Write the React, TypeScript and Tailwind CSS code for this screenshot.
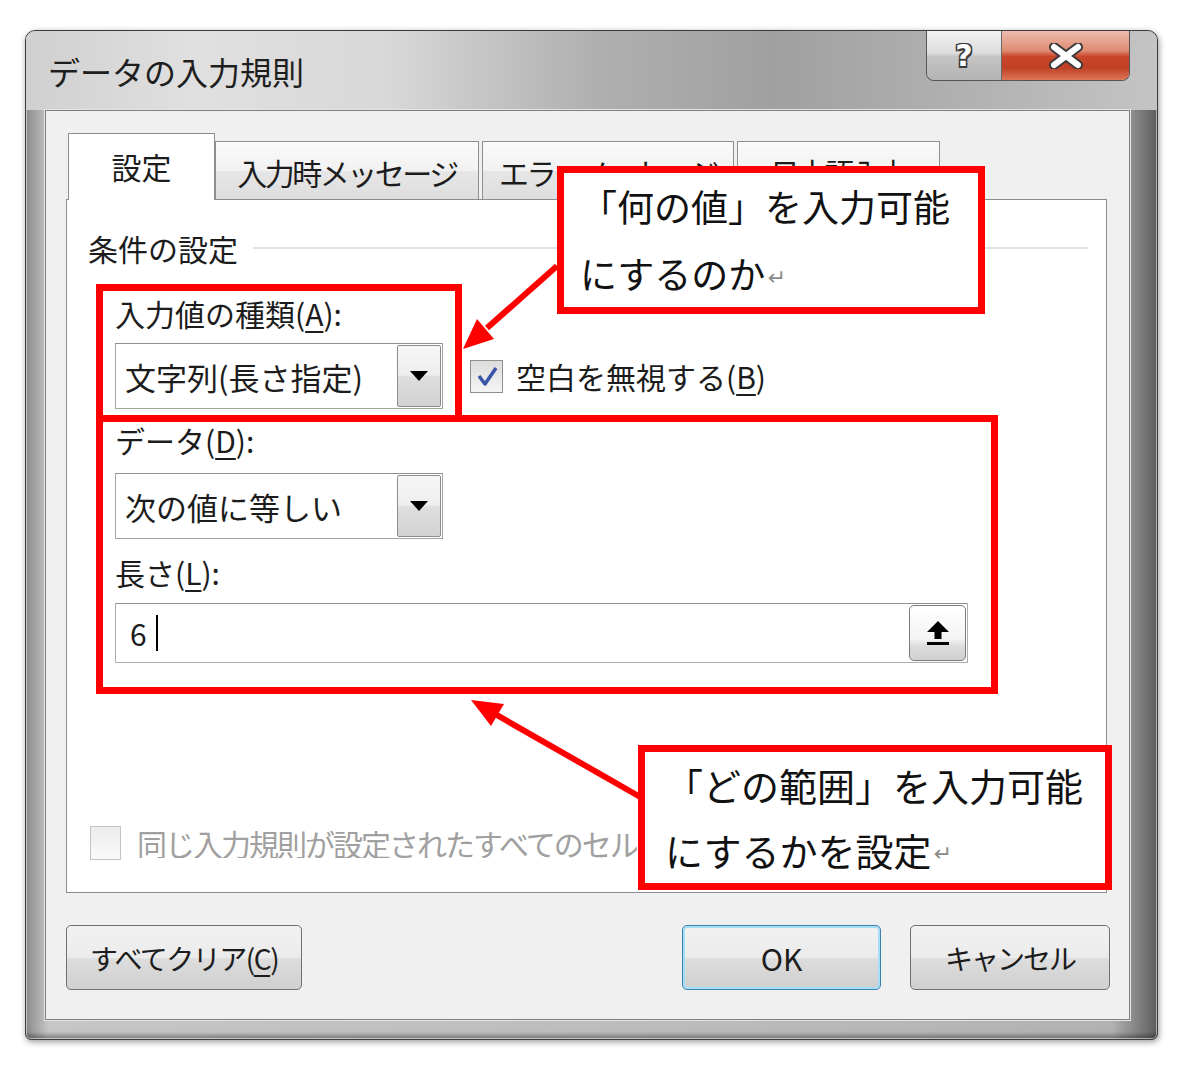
import React from "react";

function Combo({ text }: { text: string }) {
  return (
    <div className="flex h-[66px] w-[328px] items-center border border-[#a3a3a3] border-t-[#8e8f8f] bg-white">
      <span className="flex-1 whitespace-nowrap pl-[9px] text-[31px] leading-none text-[#1c1c1c]">{text}</span>
      <div className="mr-[1px] flex h-[62px] w-[44px] items-center justify-center rounded-[2px] border border-[#8c8c8c] bg-[linear-gradient(180deg,#f6f6f6_0%,#eeeeee_48%,#dedede_52%,#d2d2d2_100%)]">
        <svg width="18" height="10" viewBox="0 0 18 10">
          <path d="M0 0H18L9 10Z" fill="#000" />
        </svg>
      </div>
    </div>
  );
}

function U({ c }: { c: string }) {
  return <span className="underline decoration-[2px] underline-offset-[5px]">{c}</span>;
}

function Tab({ label, w, active, ml }: { label: string; w: string; active?: boolean; ml?: string }) {
  if (active) {
    return (
      <div className={`relative z-10 -mb-[1px] flex h-[67px] items-center justify-center border border-b-0 border-[#898c95] bg-white ${w} ${ml ?? ""}`}>
        <span className="pb-[2px] text-[30px] leading-none">{label}</span>
      </div>
    );
  }
  return (
    <div className={`flex h-[58px] items-center justify-center border border-b-0 border-[#8e8f8f] bg-[linear-gradient(180deg,#fbfbfb_0%,#f1f1f1_50%,#e6e6e6_52%,#dedede_100%)] ${w} ${ml ?? ""}`}>
      <span className="whitespace-nowrap pt-[2px] text-[30px] leading-none tracking-[-2.5px]">{label}</span>
    </div>
  );
}

function Window() {
  return (
    <div className="flex h-[1010px] w-[1133px] flex-col rounded-t-[10px] rounded-b-[6px] border border-[#3c3c3c] bg-[linear-gradient(90deg,#8a8a8a_0%,#c6c6c6_2%,#bdbdbd_50%,#b2b2b2_96%,#5e5e5e_100%)] shadow-[inset_0_0_0_1px_rgba(255,255,255,0.55),inset_0_-6px_4px_-2px_rgba(0,0,0,0.35),1px_2px_6px_rgba(0,0,0,0.4)]">
      {/* Title bar */}
      <div className="flex h-[79px] items-start justify-between rounded-t-[9px] bg-[linear-gradient(90deg,#d0d0d0_0%,#e0e0e0_15%,#d8d8d8_32%,#b0b0b0_50%,#a0a0a0_66%,#b4b4b4_86%,#c4c4c4_100%)] pl-[22px] pr-[27px]">
        <div className="self-center text-[32px] leading-none text-[#1e1e1e]">データの入力規則</div>
        <div className="flex h-[50px] overflow-hidden rounded-b-[8px] border border-t-0 border-[#555555]">
          <div className="flex w-[75px] items-center justify-center border-r border-[#6a6a6a] bg-[linear-gradient(180deg,#f2f2f2_0%,#dddddd_45%,#c4c4c4_52%,#b4b4b4_100%)]">
            <span className="font-['DejaVu_Sans',sans-serif] text-[30px] font-bold leading-none text-white [text-shadow:1.5px_1.5px_0_#3a3a3a,-1.5px_-1.5px_0_#3a3a3a,1.5px_-1.5px_0_#3a3a3a,-1.5px_1.5px_0_#3a3a3a]">?</span>
          </div>
          <div className="flex w-[127px] items-center justify-center bg-[linear-gradient(180deg,#efbcae_0%,#df8b73_40%,#c9462c_52%,#c13f25_75%,#dc7658_100%)]">
            <svg width="36" height="26" viewBox="0 0 36 26">
              <path d="M6 4L30 22M30 4L6 22" stroke="#3a3a3a" strokeWidth="10" strokeLinecap="round" />
              <path d="M6 4L30 22M30 4L6 22" stroke="#ffffff" strokeWidth="6" strokeLinecap="round" />
            </svg>
          </div>
        </div>
      </div>

      {/* Client area */}
      <div className="mb-[19px] ml-[19px] mr-[27px] flex h-[910px] flex-col border border-[#7f7f7f] bg-[#f0f0f0] pl-[20px] pr-[22px] pt-[22px] shadow-[0_0_0_1px_#e4e4e4]">
        {/* Tabs */}
        <div className="flex h-[66px] items-end">
          <Tab label="設定" w="w-[147px]" active ml="ml-[2px]" />
          <Tab label="入力時メッセージ" w="w-[264px]" />
          <Tab label="エラーメッセージ" w="w-[252px]" ml="ml-[3px]" />
          <Tab label="日本語入力" w="w-[203px]" ml="ml-[3px]" />
        </div>

        {/* Tab panel */}
        <div className="flex h-[694px] w-[1041px] flex-col border border-[#898c95] bg-white">
          <div className="mt-[28px] flex h-[40px] items-center pl-[21px]">
            <span className="text-[30px] leading-none">条件の設定</span>
            <div className="ml-[15px] mr-[18px] h-[2px] flex-1 bg-[#dce4ea]" />
          </div>

          <div className="flex flex-col pl-[48px]">
            <div className="mt-[25px] flex h-[40px] items-center text-[30px] leading-none">
              入力値の種類(<U c="A" />):
            </div>
            <div className="mt-[10px] flex items-center">
              <Combo text="文字列(長さ指定)" />
              <div className="ml-[27px] flex h-[33px] w-[33px] items-center justify-center border border-[#8e8f8f] bg-[linear-gradient(180deg,#dcdcdc_0%,#f4f4f4_100%)]">
                <svg width="26" height="26" viewBox="0 0 26 26">
                  <path d="M5 13L11 21L22 5" fill="none" stroke="#3a55a8" strokeWidth="3.5" strokeLinejoin="round" />
                </svg>
              </div>
              <span className="ml-[13px] whitespace-nowrap text-[30px] leading-none">
                空白を無視する(<U c="B" />)
              </span>
            </div>

            <div className="mt-[11px] flex h-[40px] items-center text-[30px] leading-none">
              データ(<U c="D" />):
            </div>
            <div className="mt-[13px]">
              <Combo text="次の値に等しい" />
            </div>

            <div className="mt-[13px] flex h-[40px] items-center text-[30px] leading-none">
              長さ(<U c="L" />):
            </div>
            <div className="mt-[11px] flex h-[60px] w-[853px] items-center border border-[#abadb3] border-t-[#8e8f8f] bg-white">
              <span className="pl-[14px] text-[30px] leading-none">6</span>
              <span className="ml-[9px] h-[36px] border-l-2 border-black" />
              <div className="ml-auto mr-[1px] flex h-[56px] w-[57px] items-center justify-center rounded-[5px] border border-[#7a7a7a] bg-[linear-gradient(180deg,#ffffff_0%,#f4f4f4_60%,#dcdcdc_75%,#d0d0d0_100%)]">
                <svg width="24" height="26" viewBox="0 0 24 26">
                  <path d="M12 1L23 12H15.5V19H8.5V12H1Z" fill="#000" />
                  <rect x="1" y="22" width="22" height="3" fill="#000" />
                </svg>
              </div>
            </div>
          </div>

          <div className="mt-[160px] flex h-[40px] items-center pl-[23px]">
            <div className="h-[34px] w-[31px] border border-[#c4c4c4] bg-[linear-gradient(180deg,#ececec_0%,#fafafa_100%)]" />
            <span className="ml-[16px] w-[500px] overflow-hidden whitespace-nowrap text-[30px] leading-none tracking-[-2px] text-[#a0a0a0]">
              同じ入力規則が設定されたすべてのセルに変更を適用する(P)
            </span>
          </div>
        </div>

        {/* Buttons */}
        <div className="mt-[32px] flex h-[65px] w-[1044px] items-stretch">
          <div className="flex w-[236px] items-center justify-center rounded-[5px] border border-[#707070] bg-[linear-gradient(180deg,#f2f2f2_0%,#ebebeb_50%,#dddddd_52%,#cfcfcf_100%)]">
            <span className="text-[28px] leading-none tracking-[-1.5px]">
              すべてクリア(<U c="C" />)
            </span>
          </div>
          <div className="ml-auto flex w-[199px] items-center justify-center rounded-[5px] border border-[#3c7fb1] bg-[linear-gradient(180deg,#f2f2f2_0%,#ebebeb_50%,#dddddd_52%,#cfcfcf_100%)] shadow-[inset_0_0_0_2px_#a6def5]">
            <span className="text-[30px] leading-none">OK</span>
          </div>
          <div className="ml-[29px] flex w-[200px] items-center justify-center rounded-[5px] border border-[#707070] bg-[linear-gradient(180deg,#f2f2f2_0%,#ebebeb_50%,#dddddd_52%,#cfcfcf_100%)]">
            <span className="text-[28px] leading-none tracking-[-2px]">キャンセル</span>
          </div>
        </div>
      </div>
    </div>
  );
}

function Overlays() {
  return (
    <>
      {/* red highlight boxes */}
      <div className="absolute left-[96px] top-[284px] h-[138px] w-[366px] border-[7px] border-[#ff0000]" />
      <div className="absolute left-[96px] top-[415px] h-[279px] w-[902px] border-[7px] border-[#ff0000]" />

      {/* arrows */}
      <svg className="pointer-events-none absolute left-0 top-0" width="1200" height="1067" viewBox="0 0 1200 1067">
        <line x1="557" y1="266" x2="487" y2="328" stroke="#ff0000" strokeWidth="6" />
        <polygon points="463,349 494,339 477,319" fill="#ff0000" />
        <line x1="642" y1="798" x2="495" y2="714" stroke="#ff0000" strokeWidth="6" />
        <polygon points="471,700 504,704 491,726" fill="#ff0000" />
      </svg>

      {/* callouts */}
      <div className="absolute left-[557px] top-[166px] h-[148px] w-[428px] border-[7px] border-[#ff0000] bg-white pl-[16px] text-[37px] leading-[67px] text-[#111]">
        <div className="whitespace-nowrap">「何の値」を入力可能</div>
        <div className="flex items-center whitespace-nowrap">
          にするのか<span className="ml-[2px] mt-[8px] font-['DejaVu_Sans',sans-serif] text-[22px] leading-none text-[#8a8a8a]">↵</span>
        </div>
      </div>
      <div className="absolute left-[638px] top-[745px] h-[145px] w-[474px] border-[7px] border-[#ff0000] bg-white pl-[20px] text-[38px] leading-[65px] text-[#111]">
        <div className="whitespace-nowrap">「どの範囲」を入力可能</div>
        <div className="flex items-center whitespace-nowrap">
          にするかを設定<span className="ml-[2px] mt-[8px] font-['DejaVu_Sans',sans-serif] text-[22px] leading-none text-[#8a8a8a]">↵</span>
        </div>
      </div>
    </>
  );
}

export default function App() {
  return (
    <div className="relative h-[1067px] w-[1200px] overflow-hidden bg-white font-['Noto_Sans_CJK_JP','Noto_Sans',sans-serif] text-[#1c1c1c]">
      <div className="pl-[25px] pt-[30px]">
        <Window />
      </div>
      <Overlays />
    </div>
  );
}
